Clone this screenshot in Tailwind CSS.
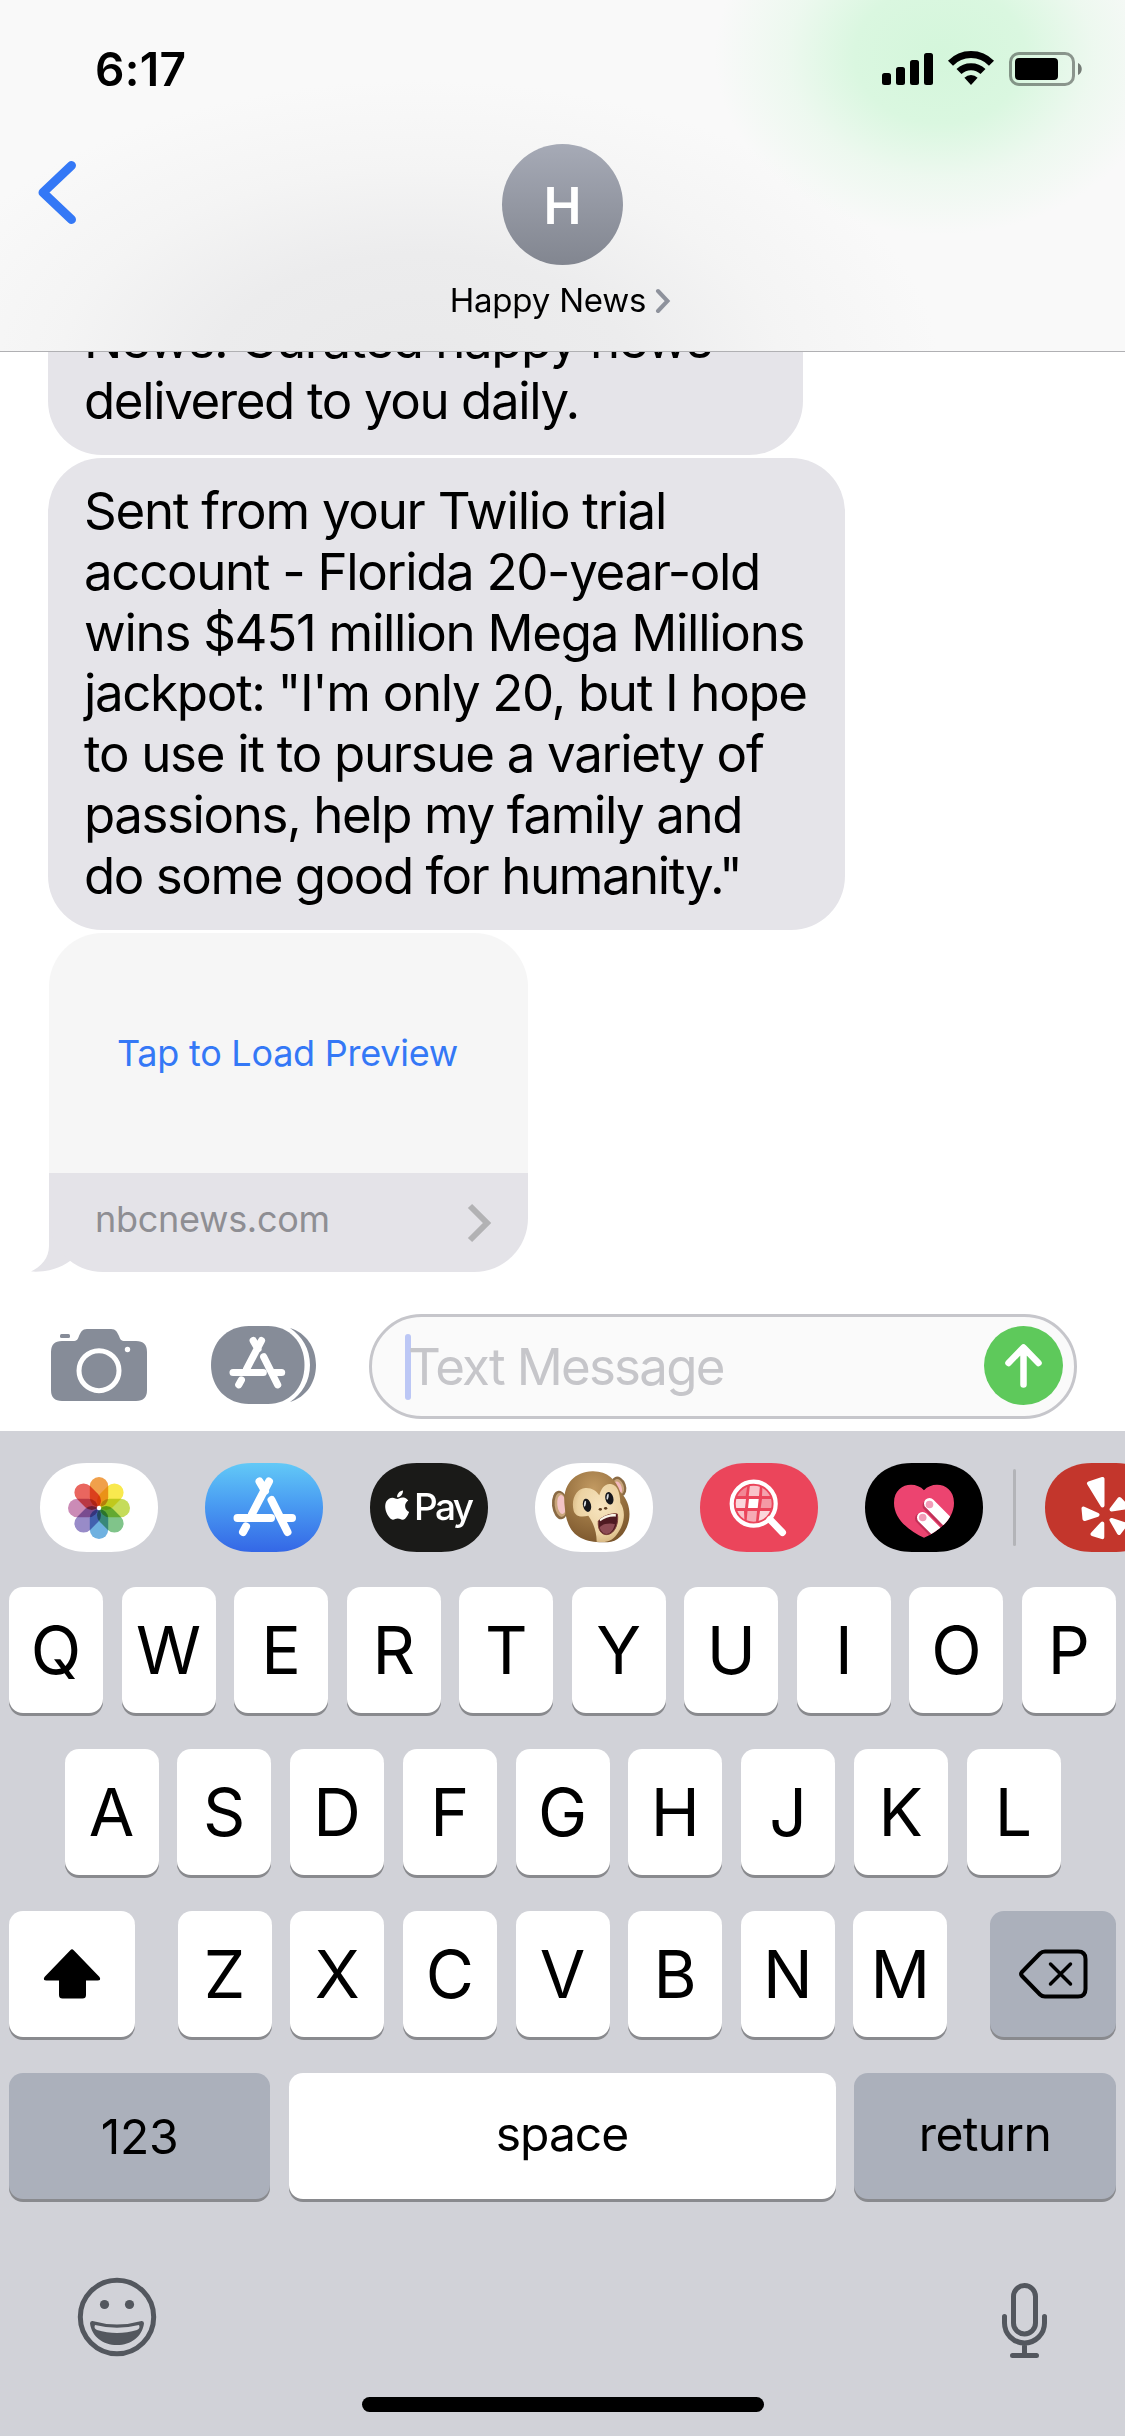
<!DOCTYPE html>
<html lang="en">
<head>
<meta charset="utf-8">
<title>Messages</title>
<script src="https://cdn.jsdelivr.net/npm/@tailwindcss/browser@4"></script>
</head>
<body class="bg-white">
<div class="flex h-[2436px] w-[1125px] flex-col overflow-hidden bg-white font-['Inter',sans-serif] text-black">

  <!-- Status bar and conversation header -->
  <header class="flex h-[352px] shrink-0 flex-col border-b border-[#b0b0b3] bg-[#f9f9f9] bg-[radial-gradient(ellipse_225px_180px_at_940px_55px,#d4f6db_0%,#daf7e0_38%,rgba(232,248,235,0.7)_68%,rgba(249,249,249,0)_100%),radial-gradient(ellipse_520px_290px_at_420px_370px,#e9e9ea_0%,#ececed_40%,rgba(243,243,243,0.8)_70%,rgba(249,249,249,0)_100%)]">
    <div class="flex h-[138px] shrink-0 items-center justify-between pr-[43px] pl-[95px]">
      <span class="text-[46px] leading-none font-semibold tracking-[0.3px]">6:17</span>
      <svg class="h-[40px] w-[202px]" viewBox="0 0 202 40">
        <rect x="2" y="24" width="9" height="12" rx="2.5"/><rect x="16" y="18" width="9" height="18" rx="2.5"/><rect x="30" y="11" width="9" height="25" rx="2.5"/><rect x="44" y="4" width="9" height="32" rx="2.5"/>
        <g fill="none" stroke="#000" stroke-width="7"><path d="M70.5 14.2a28.5 28.5 0 0 1 41 0"/><path d="M79 22.6a17 17 0 0 1 24 0"/></g>
        <path d="M91 36l-6.600-7.300a9.600 9.600 0 0 1 13.200 0z"/>
        <rect x="130.500" y="4.500" width="63" height="31" rx="8.500" fill="none" stroke="#000" stroke-opacity=".4" stroke-width="3"/>
        <rect x="135" y="9" width="43" height="22" rx="4"/>
        <path d="M198 14c5 2 5 10 0 12z" fill-opacity=".5"/>
      </svg>
    </div>
    <div class="flex grow items-start">
      <div class="flex w-[180px] shrink-0 pt-[20px] pl-[34px]">
        <svg class="h-[70px] w-[46px]" viewBox="0 0 46 70" fill="none" stroke="#3478f6" stroke-width="9" stroke-linecap="round" stroke-linejoin="round"><path d="M37.500 7.500 9 34.500 37.500 61.500"/></svg>
      </div>
      <div class="flex w-[765px] flex-col items-center pt-[6px]">
        <div class="flex size-[121px] items-center justify-center rounded-full bg-linear-to-b from-[#a6aab6] to-[#828690] pt-[2px] text-[51px] leading-none font-semibold text-white">H</div>
        <div class="flex items-center gap-[9px] pt-[15px] pr-[4px]">
          <span class="text-[33px] leading-[40px] tracking-[-0.2px]">Happy News</span>
          <svg class="h-[26px] w-[16px]" viewBox="0 0 16 26" fill="none" stroke="#8e929c" stroke-width="4" stroke-linecap="round"><path d="M3 4l9.500 10L3 24"/></svg>
        </div>
      </div>
    </div>
  </header>

  <!-- Message list, scrolled to its end -->
  <main class="flex h-[962px] shrink-0 flex-col items-start justify-end gap-[3px] overflow-hidden pb-[42px] pl-[48px] text-[51px] leading-[60.8px] *:shrink-0">
    <div class="w-[755px] rounded-[54px] bg-[#e5e4e9] px-[36px] pt-[22px] pb-[23px] whitespace-nowrap">
      <div class="tracking-[-1.45px]">News. Curated happy news</div>
      <div class="tracking-[-1.38px]">delivered to you daily.</div>
    </div>
    <div class="h-[472px] w-[797px] rounded-[54px] bg-[#e5e4e9] px-[36px] pt-[23px] whitespace-nowrap">
      <div class="tracking-[-1.25px]">Sent from your Twilio trial</div>
      <div class="tracking-[-1.32px]">account - Florida 20-year-old</div>
      <div class="tracking-[-1.27px]">wins $451 million Mega Millions</div>
      <div class="tracking-[-1.34px]">jackpot: "I'm only 20, but I hope</div>
      <div class="tracking-[-1.29px]">to use it to pursue a variety of</div>
      <div class="tracking-[-1.4px]">passions, help my family and</div>
      <div class="tracking-[-1.45px]">do some good for humanity."</div>
    </div>
    <div class="relative ml-px w-[479px]">
      <svg class="absolute bottom-0 -left-[18px] h-[60px] w-[62px]" viewBox="0 0 62 60" fill="#e4e3e8"><path d="M18 0v34C18 46 10 55 0 59.500 14 60.500 28 57 39 49L60 0z"/></svg>
      <div class="relative overflow-hidden rounded-[54px] rounded-bl-none text-[36px] leading-[44px]">
        <div class="flex h-[240px] items-center justify-center bg-[#f6f6f6] pr-[2px] tracking-[-0.25px] text-[#3478f6]">Tap to Load Preview</div>
        <div class="flex h-[99px] items-center justify-between rounded-bl-[54px] bg-[#e4e3e8] pr-[34px] pl-[46px] text-[#8e8e93]">
          <span class="-mt-[7px] tracking-[-0.3px]">nbcnews.com</span>
          <svg class="h-[42px] w-[28px]" viewBox="0 0 28 42" fill="none" stroke="#b2b2b4" stroke-width="6"><path d="M4 4l17 17L4 38"/></svg>
        </div>
      </div>
    </div>
  </main>

  <!-- Compose row -->
  <div class="flex h-[117px] shrink-0 items-start pl-[50px]">
    <svg class="mt-[14px] h-[74px] w-[98px]" viewBox="0 0 98 74">
      <path fill="#868c98" d="M1 24q0-11 11-11h11c4 0 5-2 6-5 2-4 3-7 8-7h24c5 0 6 3 8 7 1 3 2 5 6 5h11q11 0 11 11v38q0 11-11 11H12Q1 73 1 62z"/>
      <rect x="10" y="6" width="10" height="4" rx="1.500" fill="#868c98"/>
      <circle cx="49" cy="42.700" r="20" fill="none" stroke="#fff" stroke-width="5"/>
      <circle cx="77.500" cy="21.500" r="2.700" fill="#fff"/>
    </svg>
    <svg class="mt-[12px] ml-[63px] h-[78px] w-[106px]" viewBox="0 0 106 78">
      <path fill="#868c98" d="M38 0h19c21 0 36.500 16 36.500 39S78 78 57 78H38C16 78 0 62 0 39S16 0 38 0z"/>
      <path fill="#868c98" d="M79 2c16 5 26 19 26 37S95 71 79 76c12-8 20-21 20-37S91 10 79 2z"/>
      <g transform="translate(-5.500 -1.600) scale(.875)" fill="none" stroke="#fff" stroke-width="8.200" stroke-linecap="round"><path d="M64 18.500 47 51M54.500 18.500 60 28M41 63.500 38 69M66.500 37 82.500 69M31.500 55H66M78 55h9"/></g>
    </svg>
    <div class="ml-[52px] flex h-[105px] w-[708px] items-center justify-between rounded-full border-[3px] border-[#c6c6cb] bg-[#fafafa] pr-[11px] pl-[33px]">
      <div class="flex items-center">
        <div class="h-[66px] w-[6px] rounded-full bg-[#bcc7f5]"></div>
        <span class="-ml-[3px] text-[51px] leading-[60px] tracking-[-1.75px] text-[#c6c6ca]">Text Message</span>
      </div>
      <svg class="-mt-[3px] size-[79px]" viewBox="0 0 79 79"><circle cx="39.500" cy="39.500" r="39.500" fill="#5ec95b"/><path d="M39.500 58.500V22M24.500 37l15-15.500 15 15.500" fill="none" stroke="#fff" stroke-width="6.500" stroke-linecap="round" stroke-linejoin="round"/></svg>
    </div>
  </div>

  <!-- Keyboard -->
  <section class="flex h-[1005px] shrink-0 flex-col bg-[#d1d2d8]">
    <!-- App strip -->
    <div class="flex h-[156px] shrink-0 items-center gap-[47px] overflow-hidden pl-[40px]">
      <svg class="-mt-[4px] h-[89px] w-[118px] shrink-0" viewBox="0 0 118 89">
        <path fill="#fff" d="M47 0h24c28 0 47 18 47 44.500S99 89 71 89H47C19 89 0 71 0 44.500S19 0 47 0z"/>
        <g transform="translate(59 45)" class="isolate">
          <rect class="mix-blend-multiply" x="-9.200" y="-31" width="18.400" height="30" rx="9.200" fill="#f0a04b"/>
          <rect class="mix-blend-multiply" x="-9.200" y="-31" width="18.400" height="30" rx="9.200" fill="#f9e94e" transform="rotate(45)"/>
          <rect class="mix-blend-multiply" x="-9.200" y="-31" width="18.400" height="30" rx="9.200" fill="#c5dc5a" transform="rotate(90)"/>
          <rect class="mix-blend-multiply" x="-9.200" y="-31" width="18.400" height="30" rx="9.200" fill="#80c48a" transform="rotate(135)"/>
          <rect class="mix-blend-multiply" x="-9.200" y="-31" width="18.400" height="30" rx="9.200" fill="#6fb1e0" transform="rotate(180)"/>
          <rect class="mix-blend-multiply" x="-9.200" y="-31" width="18.400" height="30" rx="9.200" fill="#988bc8" transform="rotate(225)"/>
          <rect class="mix-blend-multiply" x="-9.200" y="-31" width="18.400" height="30" rx="9.200" fill="#cb8bb6" transform="rotate(270)"/>
          <rect class="mix-blend-multiply" x="-9.200" y="-31" width="18.400" height="30" rx="9.200" fill="#e9665f" transform="rotate(315)"/>
          <circle r="2.200" fill="#fff"/>
        </g>
      </svg>
      <svg class="-mt-[4px] h-[89px] w-[118px] shrink-0" viewBox="0 0 118 89">
        <defs><linearGradient id="store" x2="0" y2="1"><stop stop-color="#62c9f7"/><stop offset=".45" stop-color="#4a9df2"/><stop offset="1" stop-color="#3467e6"/></linearGradient></defs>
        <path fill="url(#store)" d="M47 0h24c28 0 47 18 47 44.500S99 89 71 89H47C19 89 0 71 0 44.500S19 0 47 0z"/>
        <path d="M64 18.500 47 51M54.500 18.500 60 28M41 63.500 38 69M66.500 37 82.500 69M32.500 55H66M78 55h9" fill="none" stroke="#fff" stroke-width="8" stroke-linecap="round"/>
      </svg>
      <svg class="-mt-[4px] h-[89px] w-[118px] shrink-0" viewBox="0 0 118 89">
        <path fill="#1a1a18" d="M47 0h24c28 0 47 18 47 44.500S99 89 71 89H47C19 89 0 71 0 44.500S19 0 47 0z"/>
        <path transform="translate(12.500 27.500) scale(1.220)" fill="#fff" d="M12.152 6.896c-.948 0-2.415-1.078-3.960-1.040-2.040.027-3.910 1.183-4.961 3.014-2.117 3.675-.546 9.103 1.519 12.090 1.013 1.454 2.208 3.090 3.792 3.039 1.520-.065 2.090-.987 3.935-.987 1.831 0 2.350.987 3.960.948 1.637-.026 2.676-1.480 3.676-2.948 1.156-1.688 1.636-3.325 1.662-3.415-.039-.013-3.182-1.221-3.220-4.857-.026-3.040 2.480-4.494 2.597-4.559-1.429-2.090-3.623-2.324-4.390-2.376-2-.156-3.675 1.090-4.610 1.090zM15.530 3.830c.843-1.012 1.400-2.427 1.245-3.830-1.207.052-2.662.805-3.532 1.818-.780.896-1.454 2.338-1.273 3.714 1.338.104 2.715-.688 3.559-1.701"/>
        <text x="44" y="57" textLength="60" fill="#fff" class="text-[37px] font-medium">Pay</text>
      </svg>
      <svg class="-mt-[4px] h-[89px] w-[118px] shrink-0" viewBox="0 0 118 89">
        <defs>
          <radialGradient id="fur" cx=".45" cy=".25" r=".8"><stop stop-color="#c29a62"/><stop offset=".6" stop-color="#96703f"/><stop offset="1" stop-color="#7a552c"/></radialGradient>
          <radialGradient id="skin" cx=".55" cy=".4" r=".65"><stop stop-color="#f7e4bf"/><stop offset=".7" stop-color="#ecd3a3"/><stop offset="1" stop-color="#d2b07a"/></radialGradient>
        </defs>
        <path fill="#fff" d="M47 0h24c28 0 47 18 47 44.500S99 89 71 89H47C19 89 0 71 0 44.500S19 0 47 0z"/>
        <g transform="translate(-5 -7) scale(.3333)">
          <ellipse cx="90" cy="147" rx="24" ry="43" fill="#8a6a44" transform="rotate(-6 90 147)"/>
          <ellipse cx="92" cy="147" rx="18" ry="36" fill="#c8a57b" transform="rotate(-6 90 147)"/>
          <ellipse cx="95" cy="146" rx="13" ry="29" fill="#f3c3c6" transform="rotate(-6 90 147)"/>
          <ellipse cx="266" cy="92" rx="22" ry="31" fill="#8a6a44" transform="rotate(-20 266 92)"/>
          <ellipse cx="266" cy="92" rx="15" ry="24" fill="#c8a57b" transform="rotate(-20 266 92)"/>
          <ellipse cx="264" cy="94" rx="10" ry="19" fill="#f3b9bd" transform="rotate(-20 266 92)"/>
          <path fill="url(#fur)" d="M104 150C96 92 128 48 187 46c45-1 70 24 84 62 24 24 31 54 26 84-7 36-31 66-64 67-50 1-97-7-117-53-9-20-10-37-12-56z"/>
          <path fill="url(#skin)" d="M131 164c-9-36 9-66 35-68 20-1 32 8 42 22 5-21 17-37 35-34 20 4 27 26 28 56 16 22 14 60-5 87-16 27-34 34-66 30 0-28-9-56-25-78-23 5-39 2-44-15z"/>
          <ellipse cx="171" cy="148" rx="12" ry="20" fill="#15171c" transform="rotate(-14 171 148)"/>
          <ellipse cx="238" cy="127" rx="12" ry="19" fill="#15171c" transform="rotate(-14 238 127)"/>
          <ellipse cx="165" cy="143" rx="3" ry="9" fill="#d8dde2" transform="rotate(10 165 143)"/>
          <ellipse cx="233" cy="122" rx="3" ry="9" fill="#d8dde2" transform="rotate(10 233 122)"/>
          <ellipse cx="211" cy="160" rx="5" ry="4" fill="#5e3c1d"/><ellipse cx="227" cy="157" rx="5" ry="4" fill="#5e3c1d"/>
          <path fill="#4f1a22" stroke="#7d4038" stroke-width="3" d="M205 196c8-14 40-26 57-22 5 24-6 60-31 62-19 1-28-18-26-40z"/>
          <path fill="#8d4b54" d="M209 214c8-10 30-14 46-9-4 15-12 28-24 29-11 1-19-8-22-20z"/>
          <path fill="#fbf6ea" d="M209 190c12-10 34-18 49-15l-1 7c-15-2-33 4-46 14z"/>
        </g>
      </svg>
      <svg class="-mt-[4px] h-[89px] w-[118px] shrink-0" viewBox="0 0 118 89">
        <path fill="#eb455b" d="M47 0h24c28 0 47 18 47 44.500S99 89 71 89H47C19 89 0 71 0 44.500S19 0 47 0z"/>
        <defs><clipPath id="lens"><circle cx="53.700" cy="40.700" r="18"/></clipPath></defs>
        <g clip-path="url(#lens)" fill="#fff">
          <path fill-opacity=".35" d="M34 22h13.500l-1.800 11H34z"/><path fill-opacity=".68" d="M50 22h10l-1 11H48.700z"/><path fill-opacity=".5" d="M62.500 22H74v11H62z"/>
          <path fill-opacity=".78" d="M34 36h12l-1 9H34z"/><path d="M49 36h9.700l-1 9H48z"/><path fill-opacity=".45" d="M62 36h12v9H60.700z"/>
          <path fill-opacity=".68" d="M34 48h10l.500 11H36z"/><path fill-opacity=".55" d="M47.500 48h9.500l-1 11H46.500z"/><path fill-opacity=".78" d="M60 48h12l-6 11h-7.500z"/>
        </g>
        <circle cx="53.700" cy="40.700" r="22" fill="none" stroke="#fff" stroke-width="4.200"/>
        <path d="M70 56.500 82.500 69.500" stroke="#fff" stroke-width="7" stroke-linecap="round"/>
      </svg>
      <svg class="-mt-[4px] h-[89px] w-[118px] shrink-0" viewBox="0 0 118 89">
        <path d="M47 0h24c28 0 47 18 47 44.500S99 89 71 89H47C19 89 0 71 0 44.500S19 0 47 0z"/>
        <defs><clipPath id="heart"><path d="M59 27.300C50 17.500 29 20.500 29 40c0 17 17 29 30 34.700C72 69 89 57 89 40 89 20.500 68 17.500 59 27.300z"/></clipPath></defs>
        <g clip-path="url(#heart)">
          <rect x="20" y="15" width="80" height="70" fill="#ec4470"/>
          <g fill="none" stroke-width="11" stroke-linecap="round">
            <path stroke="#c23158" d="M63 42.500 90 70.500M55.500 55.500 80 80.500"/>
            <path stroke="#fff" d="M64.500 40.500 92 68.500M57.500 54.500 84 81"/>
          </g>
          <circle cx="64.500" cy="41.500" r="3.800" fill="#f29cb8"/><circle cx="57.700" cy="54.500" r="3.800" fill="#f29cb8"/>
        </g>
      </svg>
      <div class="-mt-[4px] -mr-[18px] -ml-[17px] h-[77px] w-[3px] shrink-0 rounded-full bg-[#b3b4b8]"></div>
      <svg class="-mt-[4px] h-[89px] w-[118px] shrink-0" viewBox="0 0 118 89">
        <path fill="#c3362c" d="M47 0h24c28 0 47 18 47 44.500S99 89 71 89H47C19 89 0 71 0 44.500S19 0 47 0z"/>
        <g fill="#fff" stroke="#fff" stroke-width="4" stroke-linejoin="round"><path d="M44 20.500 57.500 16v26.500zM38.500 45.500l14 6.300-13 4.200zM57.300 60.500v13.700L47.500 71zM66.500 46.500 74.500 36l8 8zM66.500 57l14 4.500-6.500 8.500z"/></g>
      </svg>
    </div>

    <!-- Key rows -->
    <div class="flex flex-col gap-[36px] px-[9px] text-[66px] leading-none *:flex *:h-[126px] [&>div>div]:flex [&>div>div]:shrink-0 [&>div>div]:items-center [&>div>div]:justify-center [&>div>div]:rounded-[14px] [&>div>div]:shadow-[0_3px_0_#898a8e]">
      <div class="justify-between *:w-[94px] *:bg-white"><div>Q</div><div>W</div><div>E</div><div>R</div><div>T</div><div>Y</div><div>U</div><div>I</div><div>O</div><div>P</div></div>
      <div class="justify-between px-[55.500px] *:w-[94px] *:bg-white"><div>A</div><div>S</div><div>D</div><div>F</div><div>G</div><div>H</div><div>J</div><div>K</div><div>L</div></div>
      <div class="justify-between">
        <div class="w-[126px] bg-white"><svg class="h-[52px] w-[60px]" viewBox="0 0 60 52"><path d="M28.300 2.300q1.700-1.900 3.400 0L57.500 29q2 3.500-2 3.500H44V47q0 3.500-3.500 3.500h-20Q17 50.500 17 47V32.500H4.500q-4 0-2-3.500z"/></svg></div>
        <div class="ml-[24px] w-[94px] bg-white">Z</div><div class="w-[94px] bg-white">X</div><div class="w-[94px] bg-white">C</div><div class="w-[94px] bg-white">V</div><div class="w-[94px] bg-white">B</div><div class="w-[94px] bg-white">N</div><div class="w-[94px] bg-white">M</div>
        <div class="ml-[24px] w-[126px] bg-[#abb0bb]"><svg class="h-[52px] w-[70px]" viewBox="0 0 70 52" fill="none" stroke="#000" stroke-width="4" stroke-linecap="round" stroke-linejoin="round"><path d="M27 3.500h33q7.500 0 7.500 7.500v30q0 7.500-7.500 7.500H27q-3 0-5-2L4 28q-2-2 0-4L22 5.500q2-2 5-2z"/><path d="M32.500 16l20 20M52.500 16l-20 20" stroke-width="3.500"/></svg></div>
      </div>
      <div class="justify-between text-[48px]">
        <div class="w-[261px] bg-[#abb0bb] pt-[2px] tracking-[-0.3px]">123</div>
        <div class="w-[547px] bg-white pb-[5px] tracking-[-1px]">space</div>
        <div class="w-[262px] bg-[#abb0bb] pb-[5px] tracking-[-0.7px]">return</div>
      </div>
    </div>

    <!-- Emoji and dictation keys -->
    <div class="flex items-start justify-between pt-[75px] pr-[74px] pl-[77px]">
      <svg class="mt-[3px] size-[80px]" viewBox="0 0 80 80">
        <circle cx="40" cy="40" r="36.700" fill="none" stroke="#53575e" stroke-width="5"/>
        <circle cx="27.500" cy="27.500" r="4.600" fill="#53575e"/><circle cx="52.500" cy="27.500" r="4.600" fill="#53575e"/>
        <path d="M15.500 44q24.500 7 49 0 2.500-.3 2.500 2.500C65 60 54 68 40 68S15 60 13 46.500q0-2.800 2.500-2.500z" fill="#53575e"/>
        <path d="M18 48q22 5.500 44 0c1 2 .5 4-2 5-13 4-27 4-40 0-2.500-1-3-3-2-5z" fill="#d1d2d8"/>
      </svg>
      <svg class="mt-[6px] h-[80px] w-[54px]" viewBox="0 0 54 80" fill="none" stroke="#53575e" stroke-width="5" stroke-linecap="round"><rect x="16.500" y="5.500" width="22" height="48.500" rx="11"/><path d="M7.500 36.500v6.500a20 20 0 0 0 40 0v-6.500M27.500 63v12M15.500 75.500h24"/></svg>
    </div>
    <div class="mx-auto mt-auto mb-[24px] h-[15px] w-[402px] rounded-full bg-black"></div>
  </section>
</div>
</body>
</html>
